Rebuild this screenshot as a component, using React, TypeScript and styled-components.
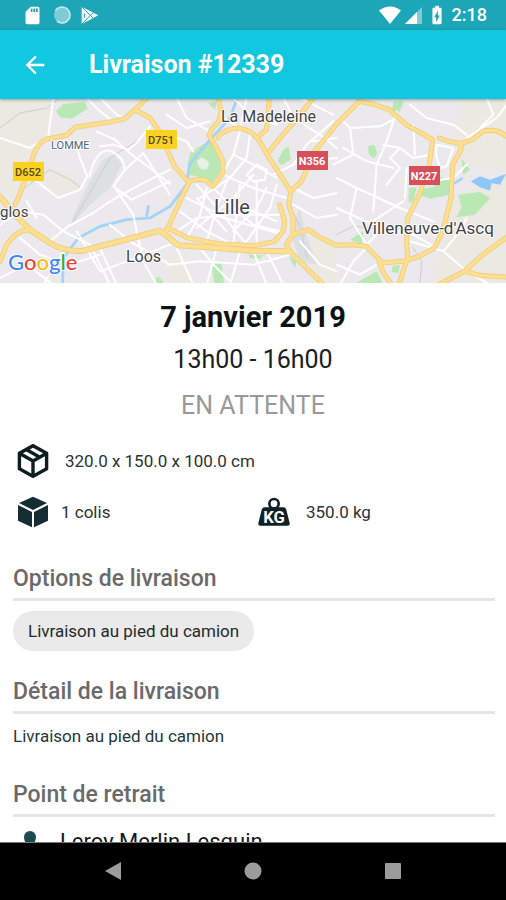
import React from "react";
import styled, { createGlobalStyle } from "styled-components";
import { MdArrowBack, MdBatteryChargingFull, MdSdCard } from "react-icons/md";

const GlobalStyle = createGlobalStyle`
  * { box-sizing: border-box; }
  body { margin: 0; background: #fff; font-family: Roboto, "Liberation Sans", sans-serif; }
`;

const Screen = styled.div`
  display: flex;
  flex-direction: column;
  height: 100vh;
  overflow: hidden;
`;

const StatusBar = styled.div`
  flex: none;
  display: flex;
  align-items: center;
  justify-content: space-between;
  height: 30px;
  padding: 0 19px 0 22px;
  background: #1da6b7;
  color: #fff;
`;

const StatusGroup = styled.div<{ $gap: number }>`
  display: flex;
  align-items: center;
  gap: ${(p) => p.$gap}px;
`;

const Clock = styled.span`
  font-size: 18px;
  font-weight: 500;
  line-height: 30px;
`;

const AppBar = styled.header`
  flex: none;
  display: flex;
  align-items: center;
  gap: 40px;
  height: 69px;
  padding: 0 21px;
  background: #12c7e0;
  color: #fff;
  position: relative;
  box-shadow: 0 1px 3px rgba(0, 0, 0, 0.35);
`;

const BackButton = styled.button`
  display: flex;
  padding: 0;
  border: 0;
  background: none;
  color: inherit;
  cursor: pointer;
`;

const Title = styled.h1`
  margin: 0;
  font-size: 25px;
  font-weight: 700;
  line-height: 34px;
`;

const Content = styled.main`
  flex: 1;
  min-height: 0;
  overflow: hidden;
`;

const MapView = styled.svg`
  display: block;
  width: 100%;
  height: 184px;
  background: #ebe9ec;
`;

const Summary = styled.section`
  padding-top: 14px;
  text-align: center;
`;

const DateLine = styled.h2`
  margin: 0;
  font-size: 29px;
  font-weight: 700;
  line-height: 40px;
  color: #0b1214;
`;

const TimeLine = styled.p`
  margin: 0;
  font-size: 25px;
  line-height: 46px;
  color: #1b2022;
`;

const StateLine = styled.p`
  margin: 0;
  font-size: 25px;
  line-height: 46px;
  color: #999;
`;

const Facts = styled.div`
  display: grid;
  grid-template-columns: 1fr 1fr;
  padding: 6px 12px 1px;
`;

const Fact = styled.div<{ $gap: number; $wide?: boolean }>`
  grid-column: ${(p) => (p.$wide ? "1 / -1" : "auto")};
  display: flex;
  align-items: center;
  gap: ${(p) => p.$gap}px;
  height: 51px;
  padding-left: 5px;
  font-size: 17px;
  color: #2b3234;
`;

const Section = styled.section`
  padding: 25px 11px 0 13px;
`;

const SectionTitle = styled.h3`
  margin: 0;
  padding-bottom: 3px;
  border-bottom: 3px solid #e6e6e6;
  font-size: 23px;
  font-weight: 500;
  line-height: 32px;
  color: #6a6a6a;
`;

const SectionBody = styled.div`
  padding-top: 10px;
`;

const Chip = styled.span`
  display: block;
  width: fit-content;
  padding: 0 15px;
  border-radius: 20px;
  background: #eaeaea;
  font-size: 17px;
  line-height: 40px;
  color: #24292a;
`;

const Detail = styled.p`
  margin: 0;
  padding-bottom: 6px;
  font-size: 17px;
  line-height: 24px;
  color: #24383c;
`;

const Pickup = styled.div`
  display: flex;
  align-items: center;
  gap: 16px;
  padding-left: 3px;
  font-size: 22px;
  line-height: 30px;
  color: #14191a;
`;

const NavBar = styled.nav`
  flex: none;
  display: grid;
  grid-template-columns: repeat(3, 140px);
  justify-content: center;
  height: 58px;
  border-top: 1px solid #777;
  background: #000;
`;

const NavButton = styled.button`
  display: flex;
  align-items: center;
  justify-content: center;
  padding: 0 0 2px;
  border: 0;
  background: none;
  cursor: pointer;
`;

const majorRoads = [
  "M45 320C70 270 78 230 95 190C105 150 120 128 145 122L200 112L225 88L330 72L375 62L405 35L440 0",
  "M405 35L450 60L485 110L504 160L524 205L564 250L589 245L614 245L639 265L669 225L669 190L644 140L627 112L634 95L656 70L664 40L654 0",
  "M654 120Q665 95 714 90Q755 95 779 130L804 175L834 220L872 280L866 320L879 360L879 410L859 440L869 460L904 495L970 560",
  "M779 112L799 95L804 60L807 0",
  "M804 165L844 115L884 70L940 0",
  "M872 280L904 250L944 160L1010 78L1048 40L1078 10L1118 18L1168 35L1218 80L1263 105L1298 125L1288 200L1258 290L1223 360L1220 430L1223 480L1196 560",
  "M1318 120L1348 130L1383 137L1383 155L1358 200L1353 300L1328 400L1303 450L1258 475L1208 490L1148 495L1118 465L1098 445L1058 440L1008 442L964 420L924 395L879 410",
  "M1383 137L1418 125L1448 100Q1490 90 1520 115",
  "M1138 495L1153 530L1176 560",
  "M1320 558L1393 520L1448 470L1520 418",
  "M1398 520L1438 532L1520 537",
  "M569 250L544 300L508 380L499 398",
  "M0 490L20 440Q50 395 90 395",
  "M504 390L564 420L654 437L764 443L824 430L849 400L854 370L839 320",
];

const ringRoad =
  "M0 295L40 345L90 395L150 435Q195 463 250 458L350 432L480 398L509 420L534 442L654 450L754 458L869 460";

const minorRoads = [
  "M0 120L90 150L125 128M160 0L148 90L145 120M260 0L300 40L340 70M300 0L350 50L375 62",
  "M225 130L240 180L262 235L240 275L175 300L110 250L80 235M290 100L345 125L395 170L450 210L510 258",
  "M268 235Q290 150 330 158Q370 175 375 215L340 265L395 305L510 250M205 385L280 345L330 310L420 260L510 215",
  "M300 145L340 140L385 155L410 135L450 85M375 215L430 165L510 290M345 270L400 350L410 400L430 490L470 560",
  "M0 380L60 340L130 350L190 400L270 440L330 560M80 310L110 360M195 455L130 560M60 420L120 470L210 500L300 470M0 540L80 500L160 560",
  "M230 400L300 520L380 490L510 440M300 450L350 560M330 380L390 430L510 500M150 430L210 380",
  "M670 60L720 90L740 0M700 0L760 60L830 80M720 100L700 170L660 240M750 110L740 180L690 240L600 300",
  "M670 230L760 270L860 300M640 270L700 330L760 380L840 400M700 170L780 210L830 240M590 260L660 340L740 440",
  "M560 300L640 340L720 350L850 350M540 340L620 400L700 440M620 270L600 350L560 420M680 250L650 330L620 430",
  "M740 230L770 200L800 215L795 245L760 250L740 230M770 250L770 440M720 260L700 440M800 270L770 330L700 400M830 260L810 330L740 430",
  "M590 390L700 300L760 230M530 400L590 360L690 350M670 300L830 370M640 350L850 410M590 300L680 400",
  "M820 230L900 190L1010 180M880 270L940 300L1010 285M880 320L950 360L1010 350M850 0L880 60L960 110L1010 150",
  "M530 0L560 60L630 100M500 50L560 90L630 70M504 110L560 130L580 160M880 200L920 140L1000 70",
  "M530 450L580 560M600 450L640 500L700 560M650 450L620 560M720 460L690 560M760 460L800 560M800 460L850 560M504 500L600 490L760 500L870 470",
  "M1020 60L1050 90L1060 170L1000 200M1050 90L1140 85L1190 60M1190 40L1160 130L1130 200L1120 340M1030 150L1100 190L1180 210",
  "M1010 240L1070 270L1200 330L1300 370M1070 270L1050 360L1100 440M1010 330L1110 375L1210 310M1150 140L1200 150L1240 180L1290 170",
  "M1200 150L1170 180L1200 210L1160 260M1240 80L1245 170M1220 210L1215 300M1090 450L1150 390L1240 410L1310 450",
  "M1310 140L1360 150L1340 205L1320 210L1308 170L1310 140M1230 20L1280 60L1360 80L1400 110M1460 0L1480 50L1440 90M1400 120L1490 60L1520 20",
  "M1230 430L1330 460L1400 520L1470 560M1330 460L1380 400L1400 360M1010 500L1080 530L1130 500M1020 560L1060 490L1100 450",
  "M1290 250L1360 240L1400 200M900 0L1000 50M940 130L1010 120M900 430L960 500L1010 520",
];

const CityMap = () => (
  <MapView viewBox="0 0 506 184" preserveAspectRatio="xMidYMid slice" role="img" aria-label="Carte de Lille">
    <rect width="506" height="184" fill="#ebe9ec" />
    <g transform="translate(0 -1) scale(.33333)" fill="none" strokeLinecap="round" strokeLinejoin="round">
      <g fill="#ece8e2">
        <path d="M0 0H150L140 110L90 190L40 300L0 260Z" />
        <path d="M130 240L190 215L245 270L170 295Z" />
        <path d="M1380 0H1520V220L1400 200L1360 140Z" />
        <path d="M1350 300L1520 230V560H1290L1330 420Z" />
        <path d="M890 420L960 415L1010 450V560H960Z" />
        <path d="M504 470L560 480L580 560H504Z" />
      </g>
      <g fill="#dde0e1">
        <path d="M205 390L240 310L275 240L310 185Q345 155 365 200L330 270L270 320Z" />
        <path d="M870 400L900 330L915 400L950 500L900 490Z" />
      </g>
      <g fill="#b9e8b4">
        <path d="M168 40L190 18L255 12L262 32L215 62L180 58Z" />
        <path d="M564 195L570 165L600 145L632 125L660 175L662 220L635 255L590 235L564 230Z" />
        <path d="M832 190L850 155L866 145L872 185L845 202Z" />
        <path d="M1180 10H1212L1200 40L1175 52Z" />
        <path d="M1104 145L1122 140L1132 165L1122 182L1106 168Z" />
        <path d="M1265 272L1300 268L1320 235L1350 250L1347 290L1290 302L1262 292Z" />
        <path d="M1375 290L1440 282L1470 300L1425 350L1368 358L1385 330Z" />
        <path d="M1226 270L1250 268L1240 310L1226 315Z" />
        <path d="M1060 560L1130 520L1150 560ZM1178 505L1200 500L1195 525L1175 522Z" />
        <path d="M634 500L665 495L672 560H644ZM865 475L890 490L885 510ZM745 470L790 472L780 482L750 480Z" />
        <path d="M462 550L475 535L490 550V560H462ZM624 15L650 10L645 35ZM1384 180L1410 215L1390 230Z" />
        <path d="M1050 425L1090 400L1085 440Z" />
      </g>
      <path d="M590 190L605 178L618 185L628 195L620 215L600 212Z" fill="#e7f2e4" />
      <g stroke="#cbccd0" strokeWidth="3">
        <path d="M0 90L60 45L140 30L180 0M220 370L330 180L410 130M60 280L150 215L210 245L245 270" />
        <path d="M1010 410L1060 385L1120 390M1240 450L1265 490L1260 560M870 320L905 400L920 480" />
      </g>
      <g stroke="#a3d3f7" strokeWidth="8">
        <path d="M188 560L190 480L235 420L300 385L380 365L450 360L510 325L560 260L568 200L630 125L690 60L712 0" />
        <path d="M440 355L445 325" />
        <path d="M1365 255L1385 242" />
      </g>
      <path d="M1412 250L1440 235L1470 245L1518 228L1500 260L1475 255L1470 278L1440 268Z" fill="#8fc7f8" />
      <g stroke="#fff" strokeWidth="6">
        {minorRoads.map((d) => (
          <path key={d} d={d} />
        ))}
      </g>
      <g stroke="#efcb80" strokeWidth="15">
        {majorRoads.map((d) => (
          <path key={d} d={d} />
        ))}
        <path d={ringRoad} strokeWidth="18" />
      </g>
      <g stroke="#fddf8f" strokeWidth="10">
        {majorRoads.map((d) => (
          <path key={d} d={d} />
        ))}
        <path d={ringRoad} strokeWidth="13" />
      </g>
    </g>
    <g fontFamily="Roboto, sans-serif" fill="#3f4347" stroke="#fff" strokeWidth="2" paintOrder="stroke" strokeLinejoin="round">
      <text x="221" y="23" fontSize="16">La Madeleine</text>
      <text x="214" y="115" fontSize="20">Lille</text>
      <text x="362" y="135" fontSize="17">Villeneuve-d'Ascq</text>
      <text x="126" y="163" fontSize="16">Loos</text>
      <text x="0" y="118" fontSize="15">glos</text>
      <text x="51" y="50" fontSize="11" fill="#53647a">LOMME</text>
    </g>
    <g fontFamily="Roboto, sans-serif" fontSize="11" fontWeight="500" textAnchor="middle">
      <rect x="13" y="63" width="31" height="19" fill="#fad222" />
      <text x="28" y="77" fill="#57491b">D652</text>
      <rect x="146" y="31" width="31" height="19" fill="#fad222" />
      <text x="161" y="45" fill="#57491b">D751</text>
      <g fill="#fff" fontWeight="700">
        <rect x="297" y="52" width="31" height="19" fill="#d5505a" />
        <text x="312" y="66">N356</text>
        <rect x="409" y="67" width="31" height="19" fill="#d5505a" />
        <text x="424" y="81">N227</text>
      </g>
    </g>
    <text x="8" y="171" fontFamily="Lato, sans-serif" fontSize="22" fontWeight="500" stroke="#fff" strokeWidth="2" paintOrder="stroke">
      <tspan fill="#4285f4">G</tspan>
      <tspan fill="#ea4335">o</tspan>
      <tspan fill="#fbbc05">o</tspan>
      <tspan fill="#4285f4">g</tspan>
      <tspan fill="#34a853">l</tspan>
      <tspan fill="#ea4335">e</tspan>
    </text>
  </MapView>
);

const PlayStoreIcon = () => (
  <svg width="18" height="19" viewBox="0 0 54 57" aria-hidden="true">
    <path d="M2 2L52 28L2 55Z" fill="#fff" />
    <path d="M2 2L38 38M2 55L38 18M10 22V36" stroke="#1da6b7" strokeWidth="3" fill="none" />
  </svg>
);

const SyncDotIcon = () => (
  <svg width="18" height="18" viewBox="0 0 18 18" aria-hidden="true">
    <circle cx="9" cy="9" r="8" fill="#7dcbd5" />
    <path d="M4 15.2A8 8 0 1 0 2.3 4.7" fill="none" stroke="#c9ebef" strokeWidth="1.5" />
  </svg>
);

const WifiIcon = () => (
  <svg width="22" height="18" viewBox="0 0 22 18" aria-hidden="true">
    <path d="M11 18L0 4.5Q11-3.500 22 4.500Z" fill="#fff" />
  </svg>
);

const SignalIcon = () => (
  <svg width="17" height="17" viewBox="0 0 17 17" aria-hidden="true">
    <path d="M17 0V17H0Z" fill="#7fccd6" />
    <path d="M12 5V17H0Z" fill="#fff" />
  </svg>
);

const PackageOutlineIcon = () => (
  <svg width="32" height="34" viewBox="3 2 18 20" aria-hidden="true">
    <path
      fill="#0d1d20"
      d="M21,16.5C21,16.88 20.79,17.21 20.47,17.38L12.57,21.82C12.41,21.94 12.21,22 12,22C11.79,22 11.59,21.94 11.43,21.82L3.53,17.38C3.21,17.21 3,16.88 3,16.5V7.5C3,7.12 3.21,6.79 3.53,6.62L11.43,2.18C11.59,2.06 11.79,2 12,2C12.21,2 12.41,2.06 12.57,2.18L20.47,6.62C20.79,6.79 21,7.12 21,7.5V16.5M12,4.15L10.11,5.22L16,8.61L17.96,7.5L12,4.15M6.04,7.5L12,10.85L13.96,9.75L8.08,6.35L6.04,7.5M5,15.91L11,19.29V12.58L5,9.21V15.91M19,15.91V9.21L13,12.58V19.29L19,15.91Z"
    />
  </svg>
);

const PackageSolidIcon = () => (
  <svg width="32" height="32" viewBox="0 0 96 96" aria-hidden="true">
    <g fill="#142d33">
      <path d="M48 2L90 21L48 42L6 21Z" />
      <path d="M3 27L45 48V94L3 74Z" />
      <path d="M93 27L51 48V94L93 74Z" />
    </g>
  </svg>
);

const WeightIcon = () => (
  <svg width="32" height="29" viewBox="0 0 96 87" aria-hidden="true">
    <circle cx="48" cy="20" r="14" fill="none" stroke="#0f2124" strokeWidth="8" />
    <path d="M20 31H76Q83 31 85 38L95 79Q96 86 89 86H7Q0 86 1 79L11 38Q13 31 20 31Z" fill="#0f2124" />
    <text x="48" y="77" textAnchor="middle" fontFamily="Roboto, sans-serif" fontWeight="700" fontSize="50" fill="#fff">
      KG
    </text>
  </svg>
);

const PinIcon = () => (
  <svg width="28" height="24" viewBox="0 0 28 24" aria-hidden="true">
    <path d="M14 1a6 6 0 0 1 6 6c0 5-6 14-6 14S8 12 8 7a6 6 0 0 1 6-6Z" fill="#1a4b51" />
  </svg>
);

export default function App() {
  return (
    <>
      <GlobalStyle />
      <Screen>
        <StatusBar>
          <StatusGroup $gap={10}>
            <MdSdCard size={21} />
            <SyncDotIcon />
            <PlayStoreIcon />
          </StatusGroup>
          <StatusGroup $gap={4}>
            <WifiIcon />
            <SignalIcon />
            <MdBatteryChargingFull size={22} />
            <Clock>2:18</Clock>
          </StatusGroup>
        </StatusBar>
        <AppBar>
          <BackButton type="button" aria-label="Retour">
            <MdArrowBack size={28} />
          </BackButton>
          <Title>Livraison #12339</Title>
        </AppBar>
        <Content>
          <CityMap />
          <Summary>
            <DateLine>7 janvier 2019</DateLine>
            <TimeLine>13h00 - 16h00</TimeLine>
            <StateLine>EN ATTENTE</StateLine>
          </Summary>
          <Facts>
            <Fact $gap={16} $wide>
              <PackageOutlineIcon />
              320.0 x 150.0 x 100.0 cm
            </Fact>
            <Fact $gap={12}>
              <PackageSolidIcon />1 colis
            </Fact>
            <Fact $gap={16}>
              <WeightIcon />
              350.0 kg
            </Fact>
          </Facts>
          <Section>
            <SectionTitle>Options de livraison</SectionTitle>
            <SectionBody>
              <Chip>Livraison au pied du camion</Chip>
            </SectionBody>
          </Section>
          <Section>
            <SectionTitle>Détail de la livraison</SectionTitle>
            <SectionBody>
              <Detail>Livraison au pied du camion</Detail>
            </SectionBody>
          </Section>
          <Section>
            <SectionTitle>Point de retrait</SectionTitle>
            <SectionBody>
              <Pickup>
                <PinIcon />
                Leroy Merlin Lesquin
              </Pickup>
            </SectionBody>
          </Section>
        </Content>
        <NavBar>
          <NavButton type="button" aria-label="Précédent">
            <svg width="18" height="18" viewBox="0 0 18 18" aria-hidden="true">
              <path d="M1 9L17 0V18Z" fill="#9c9c9c" />
            </svg>
          </NavButton>
          <NavButton type="button" aria-label="Accueil">
            <svg width="18" height="18" viewBox="0 0 18 18" aria-hidden="true">
              <circle cx="9" cy="9" r="8.500" fill="#9c9c9c" />
            </svg>
          </NavButton>
          <NavButton type="button" aria-label="Applications récentes">
            <svg width="18" height="18" viewBox="0 0 18 18" aria-hidden="true">
              <rect x="1" y="1" width="16" height="16" rx="1" fill="#9c9c9c" />
            </svg>
          </NavButton>
        </NavBar>
      </Screen>
    </>
  );
}
